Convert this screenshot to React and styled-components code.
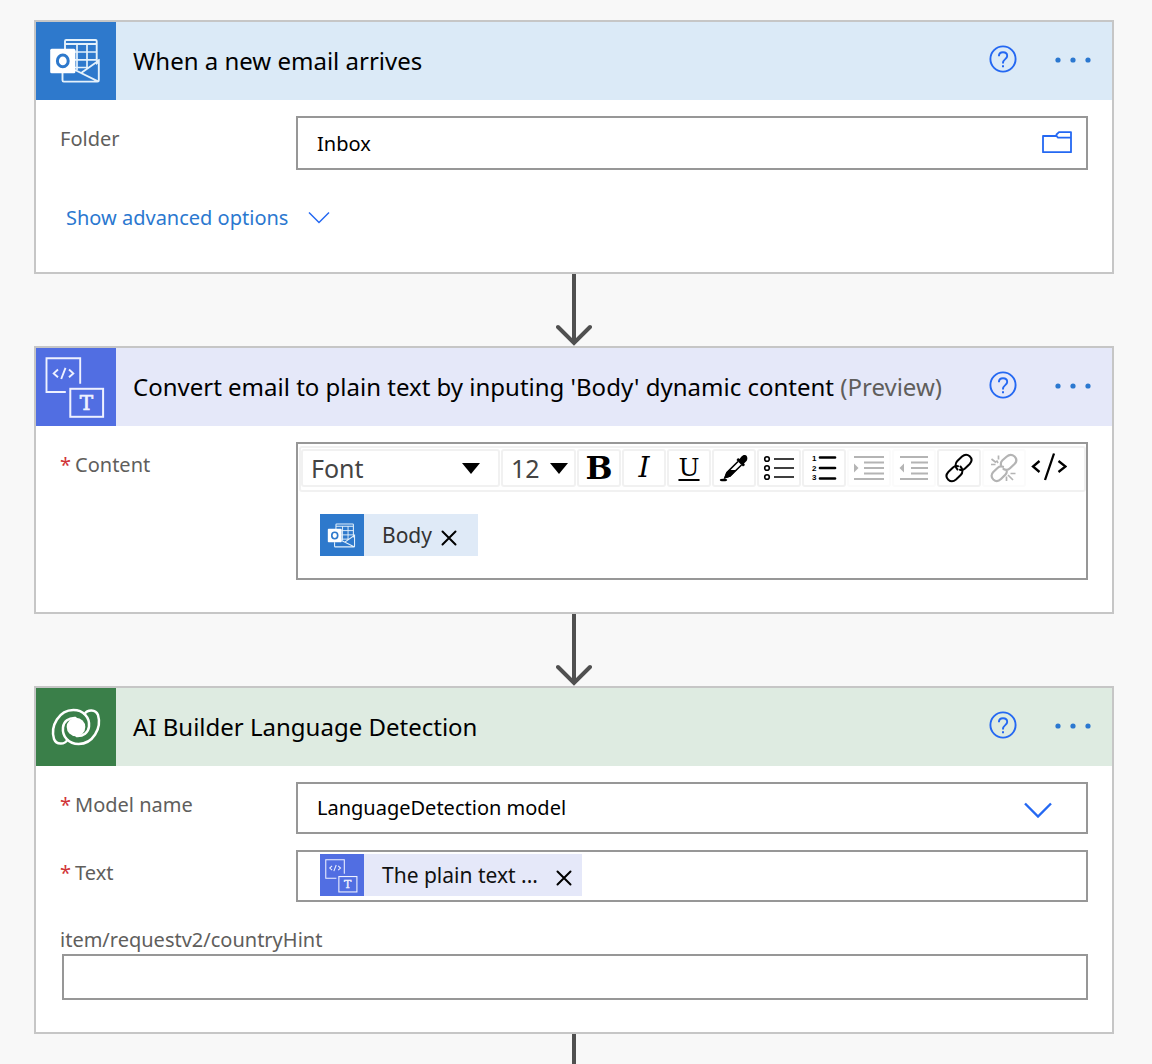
import React from "react";
import styled, { createGlobalStyle } from "styled-components";

const sans = `"Noto Sans", "Open Sans", sans-serif`;

const GlobalStyle = createGlobalStyle`
  *, *::before, *::after { box-sizing: border-box; }
  body {
    margin: 0;
    background: #f8f8f8;
    font-family: ${sans};
    font-size: 20px;
    line-height: 30px;
    color: #000;
  }
  button, input, select { font: inherit; color: inherit; }
  svg { display: block; flex: none; }
`;

const Flow = styled.main`
  display: flex;
  flex-direction: column;
  padding: 20px 38px 0 34px;
`;

const Card = styled.section`
  border: 2px solid #c6c6c6;
  background: #fff;
`;

const Header = styled.header`
  display: flex;
  align-items: center;
  height: 78px;
  background: ${(p) => p.$tint};
`;

const Tile = styled.div`
  width: 80px;
  height: 78px;
  background: ${(p) => p.$color};
`;

const Title = styled.h2`
  flex: 1;
  margin: 0;
  padding-left: 17px;
  font-size: 24px;
  font-weight: 400;
  line-height: 32px;
  white-space: nowrap;
`;

const Muted = styled.span`
  color: #605e5c;
`;

const HeaderButton = styled.button`
  display: flex;
  align-items: center;
  justify-content: center;
  width: 44px;
  height: 40px;
  padding: 0;
  border: 0;
  background: none;
`;

const HeaderActions = styled.div`
  display: flex;
  gap: 26px;
  margin: 0 17px 4px 0;
`;

const Body = styled.div`
  display: flex;
  flex-direction: column;
  gap: 16px;
  padding: 16px 24px 32px;
`;

const Row = styled.div`
  display: grid;
  grid-template-columns: 236px 1fr;
`;

const Label = styled.label`
  padding-top: 8px;
  color: #605e5c;
`;

const Star = styled.span`
  margin-right: 4px;
  color: #d13438;
`;

const Field = styled.div`
  display: flex;
  align-items: center;
  height: ${(p) => p.$height}px;
  padding-right: ${(p) => p.$padRight || 0}px;
  border: 2px solid #979797;
  background: #fff;
`;

const TextInput = styled.input`
  flex: 1;
  min-width: 0;
  height: 100%;
  padding: 0 19px;
  border: 0;
  outline: 0;
  background: none;
`;

const ModelSelect = styled.select`
  flex: 1;
  min-width: 0;
  height: 100%;
  padding: 0 19px;
  border: 0;
  outline: 0;
  appearance: none;
  background: none;
`;

const Chevron = styled.svg`
  margin-top: 4px;
`;

const IconButton = styled.button`
  padding: 0;
  border: 0;
  background: none;
`;

const AdvancedButton = styled.button`
  display: flex;
  align-items: center;
  align-self: flex-start;
  gap: 20px;
  padding: 18px 6px 8px;
  border: 0;
  background: none;
  color: #2b78d0;
  line-height: 28px;
`;

const Connector = styled.div`
  display: flex;
  justify-content: center;
  height: ${(p) => p.$height}px;
  overflow: hidden;
`;

const Editor = styled.div`
  display: flex;
  flex-direction: column;
  height: 138px;
  border: 2px solid #979797;
`;

const Toolbar = styled.div`
  display: flex;
  gap: 1px;
  height: 46px;
  margin: 2px 0 0 1px;
  padding: 1px 0 4px;
  border: 2px solid #f1f1f1;
  border-radius: 3px;
`;

const PickerBox = styled.div`
  display: flex;
  align-items: center;
  width: ${(p) => p.$width}px;
  height: 38px;
  border: 2px solid #f1f1f1;
  border-radius: 3px;
  overflow: hidden;
`;

const Picker = styled.select`
  flex: 1;
  min-width: 0;
  height: 100%;
  padding: 0 0 0 8px;
  border: 0;
  outline: 0;
  appearance: none;
  background: none;
  color: #444;
  font-size: 25px;
`;

const PickerArrow = styled.svg`
  margin-right: ${(p) => p.$gap}px;
`;

const Tool = styled.button`
  display: flex;
  align-items: center;
  justify-content: center;
  width: 44px;
  height: 38px;
  padding: 0;
  border: 2px solid ${(p) => (p.$plain ? "transparent" : "#f1f1f1")};
  border-radius: 3px;
  background: none;
  color: #000;

  &:disabled {
    border-color: #fbfbfb;
    color: #b4b4b4;
  }
`;

const Letter = styled.span`
  font-family: "DejaVu Serif", serif;
  font-size: ${(p) => p.$size}px;
  font-weight: ${(p) => (p.$bold ? 700 : 400)};
  font-style: ${(p) => (p.$italic ? "italic" : "normal")};
  text-decoration: ${(p) => (p.$underline ? "underline 2px" : "none")};
  text-underline-offset: 3px;
  line-height: 34px;
`;

const Content = styled.div`
  flex: 1;
  padding: ${(p) => p.$pad};
  outline: 0;
`;

const Token = styled.span`
  display: inline-flex;
  align-items: center;
  vertical-align: top;
  height: 42px;
  padding-right: ${(p) => p.$padRight}px;
  background: ${(p) => p.$tint};
  color: ${(p) => p.$ink};
  font-size: 21px;
`;

const TokenIcon = styled.span`
  display: flex;
  align-items: center;
  justify-content: center;
  width: 44px;
  height: 42px;
  margin-right: 18px;
  background: ${(p) => p.$color};
`;

const TokenClose = styled.button`
  margin: 6px 0 0 ${(p) => p.$gap}px;
  padding: 0;
  border: 0;
  background: none;
`;

const Stacked = styled.div`
  display: flex;
  flex-direction: column;

  ${Label} { line-height: 28px; }
  ${Field} { margin-left: 2px; }
`;

const OutlookArt = ({ width = 80, height = 78, viewBox = "0 0 80 78" }) => (
  <svg width={width} height={height} viewBox={viewBox} fill="none" aria-hidden="true">
    <g stroke="#e4f1fb" strokeWidth="1.900">
      <path d="M29 27V19.200q0-1.200 1.200-1.200H59.500q1.200 0 1.200 1.200V38.500M29 22H60.700" />
      <path d="M41 22V48M51 22V47M39 30H60.700M39 37.800H60.700M39 45.500H52" strokeWidth="1.700" />
      <path d="M26.500 51V58.300q0 1.300 1.300 1.300H61.500q1.300 0 1.300-1.300V38.500L45.800 50.600M39 48 62 59.300" />
    </g>
    <path d="M60 38.500 62.800 37V41L60 43z" fill="#e4f1fb" />
    <rect x="14.200" y="26.800" width="25.200" height="24.400" rx="1.500" fill="#fff" />
    <ellipse cx="26.800" cy="38.900" rx="5.400" ry="5.900" stroke="#2e79cc" strokeWidth="3" />
  </svg>
);

const PlainTextArt = ({ width = 80, height = 78, viewBox = "0 0 80 78" }) => (
  <svg width={width} height={height} viewBox={viewBox} fill="none" stroke="#eef1ff" aria-hidden="true">
    <path d="M44.200 35.800V10.300H10.500V44H29.800" strokeWidth="1.900" />
    <rect x="34.300" y="40.800" width="32.800" height="28" strokeWidth="2" />
    <path d="M22 21.500 17.700 25.400 22 29.300M33 21.500 37.300 25.400 33 29.300M29.500 19.800 25.200 31" strokeWidth="1.900" />
    <text x="50.500" y="62" textAnchor="middle" fontFamily="DejaVu Serif, serif" fontSize="20" fill="#eef1ff" strokeWidth="0.700">T</text>
  </svg>
);

const armPath =
  "M112 180C104 194 79 195 72 177C60 137 88 90 130 90C160 90 180 112 177 140C175 158 160 169 140 168";

const SwirlArt = () => (
  <svg width="80" height="78" viewBox="18 24 240 234" fill="none" stroke="#fff" strokeWidth="7.500" strokeLinecap="round" aria-hidden="true">
    <path d={armPath} />
    <path d={armPath} transform="rotate(180 138 141)" />
    <circle cx="138" cy="141" r="28" fill="#fff" stroke="none" />
  </svg>
);

const Actions = () => (
  <HeaderActions>
    <HeaderButton aria-label="Help">
      <svg width="28" height="28" viewBox="0 0 28 28" fill="none" stroke="#2468f2" strokeWidth="1.900">
        <circle cx="14" cy="14" r="12.600" />
        <path d="M9.900 11.200C9.900 8.700 11.600 7.300 14 7.300S18.200 8.800 18.200 11C18.200 14 14 14.300 14 17.800V18.600" />
        <path d="M14 20.300V22.300" strokeWidth="2" />
      </svg>
    </HeaderButton>
    <HeaderButton aria-label="More options">
      <svg width="36" height="8" viewBox="0 0 36 8" fill="#2b78d0">
        <circle cx="3" cy="5" r="2.600" />
        <circle cx="18" cy="5" r="2.600" />
        <circle cx="33" cy="5" r="2.600" />
      </svg>
    </HeaderButton>
  </HeaderActions>
);

const CardHeader = ({ tint, color, art, title, note }) => (
  <Header $tint={tint}>
    <Tile $color={color}>{art}</Tile>
    <Title>
      {title}
      {note && <Muted> {note}</Muted>}
    </Title>
    <Actions />
  </Header>
);

const Arrow = ({ height = 72 }) => (
  <Connector $height={height}>
    <svg width="36" height="72" viewBox="0 0 36 72" fill="none" stroke="#505050" strokeWidth="4">
      <path d="M18 0V68" />
      <path d="M2 53 18 69 34 53" strokeLinecap="round" />
    </svg>
  </Connector>
);

const Triangle = ({ gap }) => (
  <PickerArrow $gap={gap} width="18" height="11" viewBox="0 0 18 11" aria-hidden="true">
    <path d="M0 0H18L9 11z" fill="#000" />
  </PickerArrow>
);

const Cross = () => (
  <svg width="16" height="16" viewBox="0 0 16 16" stroke="#000" strokeWidth="2" strokeLinecap="round" aria-hidden="true">
    <path d="M1.500 1.500 14.500 14.500M14.500 1.500 1.500 14.500" />
  </svg>
);

const ToolIcon = ({ children, width = 32 }) => (
  <svg width={width} height="30" viewBox={`0 0 ${width} 30`} fill="none" stroke="currentColor" aria-hidden="true">
    {children}
  </svg>
);

const ColorIcon = () => (
  <ToolIcon>
    <path d="M27 2C29.500 2.500 30 6 28.500 8L26 10.500 27 12 25 13.500 18.500 7 20 5 21.500 6 23.500 3.500C24.500 2.300 25.800 1.700 27 2z" fill="currentColor" stroke="none" />
    <path d="M20 8.500 9 19.500 7 24.500 12 23 23.500 12" strokeWidth="1.600" />
    <path d="M11 17H18.500L12.500 23.500 6 26 8 20z" fill="currentColor" stroke="none" />
    <ellipse cx="5.500" cy="27" rx="3.700" ry="1.300" fill="currentColor" stroke="none" />
  </ToolIcon>
);

const BulletIcon = () => (
  <ToolIcon>
    <g strokeWidth="1.600">
      <circle cx="4" cy="6" r="2.300" />
      <circle cx="4" cy="15" r="2.300" />
      <circle cx="4" cy="24" r="2.300" />
    </g>
    <path d="M11 6H31M11 15H31M11 24H31" strokeWidth="1.700" />
  </ToolIcon>
);

const NumberIcon = () => (
  <ToolIcon width={26}>
    <g fill="currentColor" stroke="none" fontFamily="Liberation Sans Narrow, Liberation Sans, sans-serif" fontWeight="700" fontSize="8">
      <text x="1" y="8">1</text>
      <text x="1" y="18">2</text>
      <text x="1" y="27">3</text>
    </g>
    <path d="M9 4.500H24M9 15H24M9 25.500H24" strokeWidth="2.700" strokeLinecap="round" />
  </ToolIcon>
);

const IndentIcon = () => (
  <ToolIcon>
    <path d="M1 4H31M11 9.500H31M11 15H31M11 20.500H31M1 26H31" strokeWidth="2" />
    <path d="M1 10.500 5.500 15 1 19.500z" fill="currentColor" stroke="none" />
  </ToolIcon>
);

const OutdentIcon = () => (
  <ToolIcon>
    <path d="M2 4H30M13 9.500H30M13 15H30M13 20.500H30M2 26H30" strokeWidth="2" />
    <path d="M6 10.500 1.500 15 6 19.500z" fill="currentColor" stroke="none" />
  </ToolIcon>
);

const LinkIcon = () => (
  <ToolIcon>
    <g strokeWidth="2" strokeLinecap="round">
      <path d="M14.500 16.500C12 14 12 10.300 14.300 8L19 3.500C21.500 1.300 24.500 1.300 26.700 3.300C29 5.500 29 8.500 26.700 11L22 15.500C20.500 17 18.800 17.200 17 16.800" />
      <path d="M17.500 13.500C20 16 20 19.700 17.700 22L13 26.500C10.500 28.700 7.500 28.700 5.300 26.700C3 24.500 3 21.500 5.300 19L10 14.500C11.500 13 13.200 12.800 15 13.200" />
    </g>
  </ToolIcon>
);

const UnlinkIcon = () => (
  <ToolIcon>
    <g strokeWidth="2.200" strokeLinecap="round">
      <path d="M13 12C12.500 10 13.200 8.500 14.500 7.300L18.500 3.700C21 1.500 24.300 1.500 26.600 3.500C28.700 5.700 28.700 8.700 26.500 11L22 15.300C20 17.200 17.500 17.200 15.500 16" />
      <path d="M18.800 18.500C18.800 19.800 18.200 20.800 17.300 21.700L13 26C10.500 28.500 7.500 28.500 5.300 26.500C3 24.300 3 21.300 5.300 19L9.500 15C11 13.500 13 13 15 13.800" />
    </g>
    <path d="M8.500 7.500 10 10M3.500 6 8 9.500M3 11.500H7.500M10.500 2.500V6.500M20 22 25 27M18.500 23.500V28M22.500 20.500H27.500" strokeWidth="1.700" />
  </ToolIcon>
);

const CodeIcon = () => (
  <ToolIcon width={36}>
    <path d="M8.500 8 2 13.500 8.500 19M27.500 8 34.500 13.500 27.500 19M23 0.500 14 27" strokeWidth="2.300" />
  </ToolIcon>
);

export default function App() {
  return (
    <>
      <GlobalStyle />
      <Flow>
        <Card>
          <CardHeader tint="#dbeaf7" color="#2e79cc" art={<OutlookArt />} title="When a new email arrives" />
          <Body>
            <Row>
              <Label htmlFor="folder">Folder</Label>
              <Field $height={54} $padRight={14}>
                <TextInput id="folder" defaultValue="Inbox" />
                <IconButton aria-label="Pick a folder">
                  <svg width="30" height="24" viewBox="0 0 30 24" fill="none" stroke="#2468f2" strokeWidth="1.800" strokeLinejoin="round">
                    <path d="M14.500 5H1V21.200H29V1.200H17L14.500 3.500V5L16 6.700H29" />
                  </svg>
                </IconButton>
              </Field>
            </Row>
            <AdvancedButton>
              Show advanced options
              <svg width="22" height="14" viewBox="0 0 22 14" fill="none" stroke="#2468f2" strokeWidth="1.500">
                <path d="M1 1.500 11 11.500 21 1.500" />
              </svg>
            </AdvancedButton>
          </Body>
        </Card>

        <Arrow />

        <Card>
          <CardHeader
            tint="#e5e8f9"
            color="#516ee2"
            art={<PlainTextArt />}
            title="Convert email to plain text by inputing 'Body' dynamic content"
            note="(Preview)"
          />
          <Body>
            <Row>
              <Label as="div" id="content-label"><Star>*</Star>Content</Label>
              <Editor>
                <Toolbar role="toolbar" aria-label="Formatting">
                  <PickerBox $width={199}>
                    <Picker aria-label="Font"><option>Font</option></Picker>
                    <Triangle gap={18} />
                  </PickerBox>
                  <PickerBox $width={75}>
                    <Picker aria-label="Font size"><option>12</option></Picker>
                    <Triangle gap={6} />
                  </PickerBox>
                  <Tool aria-label="Bold"><Letter $size={32} $bold>B</Letter></Tool>
                  <Tool aria-label="Italic"><Letter $size={28} $italic>I</Letter></Tool>
                  <Tool aria-label="Underline"><Letter $size={25} $underline>U</Letter></Tool>
                  <Tool aria-label="Text color"><ColorIcon /></Tool>
                  <Tool aria-label="Bulleted list"><BulletIcon /></Tool>
                  <Tool aria-label="Numbered list"><NumberIcon /></Tool>
                  <Tool aria-label="Indent" disabled><IndentIcon /></Tool>
                  <Tool aria-label="Outdent" disabled><OutdentIcon /></Tool>
                  <Tool aria-label="Link"><LinkIcon /></Tool>
                  <Tool aria-label="Remove link" disabled><UnlinkIcon /></Tool>
                  <Tool aria-label="Code view" $plain><CodeIcon /></Tool>
                </Toolbar>
                <Content $pad="22px" role="textbox" aria-labelledby="content-label" tabIndex={0}>
                  <Token $tint="#dfeaf7" $ink="#333" $padRight={21}>
                    <TokenIcon $color="#2e79cc"><OutlookArt width={44} height={42} viewBox="0 0 80 76" /></TokenIcon>
                    Body
                    <TokenClose $gap={9} aria-label="Remove Body"><Cross /></TokenClose>
                  </Token>
                </Content>
              </Editor>
            </Row>
          </Body>
        </Card>

        <Arrow />

        <Card>
          <CardHeader tint="#deebe1" color="#3a7f49" art={<SwirlArt />} title="AI Builder Language Detection" />
          <Body>
            <Row>
              <Label htmlFor="model"><Star>*</Star>Model name</Label>
              <Field $height={52} $padRight={34}>
                <ModelSelect id="model"><option>LanguageDetection model</option></ModelSelect>
                <Chevron width="28" height="16" viewBox="0 0 28 16" fill="none" stroke="#2468f2" strokeWidth="2.400" aria-hidden="true">
                  <path d="M1 1.500 14 14.500 27 1.500" />
                </Chevron>
              </Field>
            </Row>
            <Row>
              <Label as="div" id="text-label"><Star>*</Star>Text</Label>
              <Field $height={52}>
                <Content $pad="0 22px 2px" role="textbox" aria-labelledby="text-label" tabIndex={0}>
                  <Token $tint="#e5e8f9" $ink="#111" $padRight={10}>
                    <TokenIcon $color="#516ee2"><PlainTextArt width={44} height={42} viewBox="0 0 80 76" /></TokenIcon>
                    The plain text ...
                    <TokenClose $gap={18} aria-label="Remove The plain text"><Cross /></TokenClose>
                  </Token>
                </Content>
              </Field>
            </Row>
            <Stacked>
              <Label htmlFor="hint">item/requestv2/countryHint</Label>
              <Field $height={46}><TextInput id="hint" /></Field>
            </Stacked>
          </Body>
        </Card>

        <Arrow height={30} />
      </Flow>
    </>
  );
}
